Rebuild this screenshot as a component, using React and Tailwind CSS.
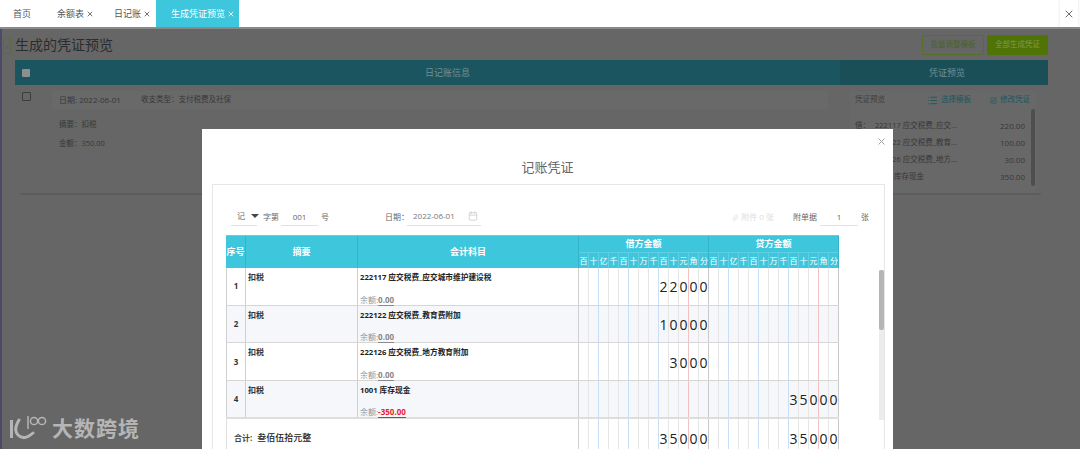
import React from "react";
import { X, List, SquarePen, Paperclip, Calendar } from "lucide-react";

const units = ["百","十","亿","千","百","十","万","千","百","十","元","角","分"];

// The blue/red rules sit to the left of 亿, 万, 百 and 角.
const cellLine = (i) => {
  if (i === 1 || i === 4 || i === 7) return "border-r border-r-[#c9dff5]";
  if (i === 10) return "border-r border-r-[#f3c1c1]";
  if (i === 12) return "border-r border-r-[#c9c9c9]";
  return "border-r border-r-[#e6e6e6]";
};

function Digits({ value = "" }) {
  const chars = value.padStart(13, " ").split("");
  return (
    <div className="flex w-[130px] shrink-0 h-full">
      {chars.map((c, i) => (
        <div key={i} className={`w-[10px] shrink-0 h-full pt-[2px] flex items-center justify-center text-[14px] leading-none text-[#222] ${cellLine(i)}`}>
          {c.trim()}
        </div>
      ))}
    </div>
  );
}

const rows = [
  { n: "1", acc: "222117 应交税费_应交城市维护建设税", bal: "0.00", d: "22000", c: "", alt: false },
  { n: "2", acc: "222122 应交税费_教育费附加", bal: "0.00", d: "10000", c: "", alt: true },
  { n: "3", acc: "222126 应交税费_地方教育附加", bal: "0.00", d: "3000", c: "", alt: false },
  { n: "4", acc: "1001 库存现金", bal: "-350.00", d: "", c: "35000", alt: true, neg: true },
];

function Row({ r, last }) {
  return (
    <div className={`flex border-b ${r.alt ? "bg-[#f5f7fb]" : "bg-white"} ${last ? "h-[38px] border-b-2 border-b-[#dedede]" : "h-[37.7px] border-[#d6d6d6]"}`}>
      <div className="w-[20px] shrink-0 flex items-center justify-center text-[8px] font-bold text-[#333] border-x border-[#cfcfcf]">{r.n}</div>
      <div className="w-[112px] shrink-0 pl-[2px] pt-[3px] text-[8px] font-bold leading-[11px] text-[#333] border-r border-[#cfcfcf]">扣税</div>
      <div className="w-[221px] shrink-0 pl-[2px] pt-[4px] flex flex-col justify-between border-r border-[#cfcfcf]">
        <div className="text-[7.7px] font-bold leading-[11px] text-[#222]">{r.acc}</div>
        <div className="text-[8px] leading-[11px] text-[#999]">
          余额:<span className={`font-bold border-b ${r.neg ? "text-[#e8202a] border-[#e8202a]" : "text-[#888] border-[#888]"}`}>{r.bal}</span>
        </div>
      </div>
      <Digits value={r.d} />
      <Digits value={r.c} />
    </div>
  );
}

export default function App() {
  return (
    <div className="relative w-[1080px] h-[449px] overflow-hidden bg-[#666] flex flex-col font-['Open_Sans','Noto_Sans_CJK_SC',sans-serif]">
      {/* Tab bar */}
      <div className="h-[29px] shrink-0 bg-white border-b-2 border-[#8a8a8a] flex items-start text-[9px] text-[#555]">
        <div className="h-[27px] flex items-center pl-[13px] w-[57px]">首页</div>
        <div className="h-[27px] flex items-center w-[57px] gap-[2px]">
          <span>余额表</span><X className="w-[8px] h-[8px]" strokeWidth={2.5} />
        </div>
        <div className="h-[27px] flex items-center w-[42px] gap-[2px]">
          <span className="shrink-0">日记账</span><X className="w-[8px] h-[8px] shrink-0" strokeWidth={2.5} />
        </div>
        <div className="h-[27px] w-[83px] bg-[#3ec6dd] text-white flex items-center pl-[15px] gap-[2px]">
          <span className="shrink-0">生成凭证预览</span><X className="w-[8px] h-[8px] shrink-0" strokeWidth={2.5} />
        </div>
        <div className="ml-auto mr-[2px] h-[27px] w-[18px] bg-white shadow-[0_0_3px_rgba(0,0,0,0.12)] flex items-center justify-center text-[#555]">
          <X className="w-[12px] h-[12px]" strokeWidth={1.75} />
        </div>
      </div>

      {/* Dimmed page */}
      <div className="flex-1 flex min-h-0">
        <div className="w-[2px] shrink-0 bg-[#4b4a68]" />
        <div className="flex-1 flex flex-col min-w-0 pl-[13px] pr-[32px] bg-[#666]">
          <div className="relative h-[31px] shrink-0 flex items-center justify-between">
            <div className="absolute left-[-12px] top-[9px] w-[8px] h-[16px] border border-[#5b6a45] rounded-[1px] text-[#4f5b44] text-[8px] leading-[14px] text-center">‹</div>
            <div className="text-[14px] text-[#2c2c2c] leading-none">生成的凭证预览</div>
            <div className="flex gap-[3px] text-[7.5px]">
              <div className="w-[62px] h-[20px] border border-[#55702a] rounded-[2px] flex items-center justify-center text-[#4a6420]">批量调整模板</div>
              <div className="w-[61px] h-[20px] bg-[#4f7305] rounded-[2px] flex items-center justify-center text-[#7f9a50]">全部生成凭证</div>
            </div>
          </div>
          <div className="h-[25px] shrink-0 flex bg-[#1b555f] text-[9px] text-[#6f9097]">
            <div className="w-[825px] shrink-0 flex items-center relative justify-center pl-[40px]">
              <div className="absolute left-[7px] w-[8px] h-[8px] bg-[#8f8f8f] rounded-[1px]" />
              日记账信息
            </div>
            <div className="flex-1 flex items-center justify-center pl-[6px] bg-[#1b4f58]">凭证预览</div>
          </div>
          <div className="flex h-[110px] shrink-0 border-b-2 border-[#5d5d5d] ml-[5px] mr-[7px] text-[7.5px] text-[#373737]">
            <div className="w-[830px] shrink-0 flex">
              <div className="w-[32px] shrink-0 pl-[2px] pt-[7px]">
                <div className="w-[9px] h-[9px] border border-[#3c3c3c] rounded-[1px]" />
              </div>
              <div className="flex-1 pr-[22px] pt-[6px]">
                <div className="h-[18px] bg-[#696969] flex items-center pl-[7px] gap-[20px]">
                  <span className="text-[8px]">日期: 2022-06-01</span><span>收支类型：支付税费及社保</span>
                </div>
                <div className="pl-[7px] mt-[6px] leading-[19px]">
                  <div>摘要：扣税</div>
                  <div>金额：350.00</div>
                </div>
              </div>
            </div>
            <div className="w-[186px] shrink-0 bg-[#686868] relative mt-[6px]">
              <div className="h-[18px] flex items-center pl-[5px] text-[#3e3e3e] whitespace-nowrap">
                <span>凭证预览</span>
                <span className="ml-[42px] flex items-center gap-[3px] text-[#1d5660]"><List className="w-[11px] h-[11px]" />选择模板</span>
                <span className="ml-[19px] flex items-center gap-[3px] text-[#1d5660]"><SquarePen className="w-[7px] h-[7px]" />修改凭证</span>
              </div>
              <div className="pl-[5px] pr-[11px] mt-[8px] leading-[17px]">
                {[["借：","222117 应交税费_应交...","220.00"],["贷：","222122 应交税费_教育...","100.00"],["贷：","222126 应交税费_地方...","30.00"],["贷：","1001 库存现金","350.00"]].map((r,i)=>(
                  <div key={i} className="flex">
                    <span className="w-[20px] shrink-0">{r[0]}</span>
                    <span className="flex-1">{r[1]}</span>
                    <span className="text-[8px]">{r[2]}</span>
                  </div>
                ))}
              </div>
              <div className="absolute right-[1px] top-[18px] w-[4px] h-[77px] rounded-[2px] bg-[#4e4e4e]" />
            </div>
          </div>
        </div>
      </div>

      {/* Modal */}
      <div className="absolute left-[202px] top-[129px] w-[691px] h-[320px] bg-white px-[10px] flex flex-col">
        <div className="absolute right-[6px] top-[7px] text-[#999]"><X className="w-[11px] h-[11px]" strokeWidth={2} /></div>
        <div className="h-[55px] shrink-0 flex items-end justify-center pb-[8px] text-[13px] leading-[18px] text-[#666]">记账凭证</div>
        <div className="relative flex-1 min-h-0 w-[673px] border border-b-0 border-[#e6e6e6] pl-[13px] overflow-hidden">
          {/* Form row */}
          <div className="h-[50px] pt-[22px] flex items-start text-[8px] text-[#666] leading-[20px] whitespace-nowrap">
            <div className="ml-[5px] w-[26px] h-[19px] border-b border-[#e2e2e2] flex items-center pl-[6px] gap-[6px]">
              <span>记</span>
              <svg width="8" height="4" viewBox="0 0 8 4" className="shrink-0"><path d="M0 0h8L4 4z" fill="#444" /></svg>
            </div>
            <span className="ml-[6px] w-[18px] shrink-0">字第</span>
            <div className="w-[37px] h-[19px] border-b border-[#e2e2e2] text-center">001</div>
            <span className="ml-[3px]">号</span>
            <span className="ml-[56px] w-[22px]">日期：</span>
            <div className="w-[74px] h-[19px] border-b border-[#e2e2e2] pl-[6px] flex items-center justify-between pr-[3px] text-[#777]">
              <span>2022-06-01</span>
              <Calendar className="w-[10px] h-[10px] text-[#ccc]" />
            </div>
            <span className="ml-auto flex items-center gap-[2px] text-[#ddd]"><Paperclip className="w-[7px] h-[7px]" />附件 0 张</span>
            <span className="ml-[19px]">附单据</span>
            <div className="ml-[3px] w-[38px] h-[19px] border-b border-[#e2e2e2] text-center">1</div>
            <span className="ml-[3px] mr-[15px]">张</span>
          </div>

          {/* Voucher table */}
          <div className="w-[613px]">
            <div className="flex h-[33px] bg-[#3ec6dd] text-white text-[9px] font-bold border-t border-[#62cfe2]">
              <div className="w-[20px] shrink-0 flex items-center justify-center border-r border-[#35b3c9] whitespace-nowrap">序号</div>
              <div className="w-[112px] shrink-0 flex items-center justify-center border-r border-[#35b3c9]">摘要</div>
              <div className="w-[221px] shrink-0 flex items-center justify-center border-r border-[#35b3c9]">会计科目</div>
              {["借方金额","贷方金额"].map((t) => (
                <div key={t} className="w-[130px] shrink-0 flex flex-col border-r border-[#35b3c9]">
                  <div className="h-[17px] flex items-center justify-center border-b border-[#5fd0e4]">{t}</div>
                  <div className="flex-1 flex">
                    {units.map((u, i) => (
                      <div key={i} className="w-[10px] shrink-0 flex items-center justify-center text-[8px] font-normal border-r border-[#5fd0e4] last:border-r-0">{u}</div>
                    ))}
                  </div>
                </div>
              ))}
            </div>
            {rows.map((r, i) => <Row key={r.n} r={r} last={i === 3} />)}
            <div className="flex h-[37px]">
              <div className="w-[353px] shrink-0 flex items-center pl-[7px] gap-[5px] border-l border-[#e0e0e0] border-r border-r-[#cfcfcf]">
                <span className="text-[8px] font-bold text-[#444]">合计:</span>
                <span className="text-[9px] font-medium text-[#222]">叁佰伍拾元整</span>
              </div>
              <Digits value="35000" />
              <Digits value="35000" />
            </div>
          </div>

          {/* Scrollbar */}
          <div className="absolute right-0 top-[85px] w-[5px] h-[150px] bg-[#ececec]">
            <div className="w-[5px] h-[60px] bg-[#b5b5b5] rounded-[2px]" />
          </div>
        </div>
      </div>

      {/* Watermark */}
      <div className="absolute left-[10px] top-[414px] flex items-center gap-[4px] text-[#b5b5b5]">
        <svg width="38" height="28" viewBox="0 0 38 28" fill="none" stroke="#b5b5b5">
          <path d="M1.5 6v18" strokeWidth="3" />
          <path d="M9 6Q3 16 8 21Q14 27 23 19" strokeWidth="3" strokeLinecap="round" />
          <path d="M18 2v13" strokeWidth="1.5" />
          <circle cx="24" cy="7" r="3.6" strokeWidth="1.5" />
          <circle cx="32" cy="7" r="3.6" strokeWidth="1.5" />
        </svg>
        <span className="text-[21px] font-bold leading-none tracking-[1px]">大数跨境</span>
      </div>
    </div>
  );
}
